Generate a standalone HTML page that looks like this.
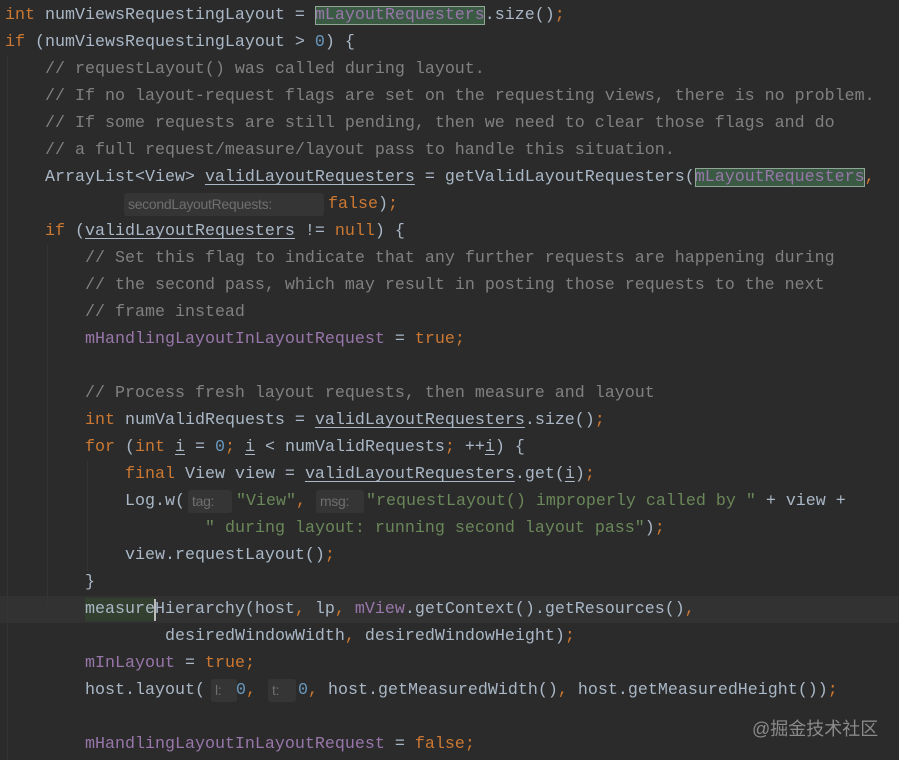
<!DOCTYPE html>
<html><head><meta charset="utf-8"><style>
html,body{margin:0;padding:0;background:#2b2b2b;width:899px;height:760px;overflow:hidden}
body{position:relative;font-family:"Liberation Mono",monospace;font-size:16.67px;color:#a9b7c6}
#w{position:absolute;left:0;top:2px;width:899px;height:760px}
.l{position:absolute;height:27px;line-height:27px;white-space:pre}
.k{color:#cc7832}.c{color:#808080}.n{color:#6897bb}.s{color:#6a8759}.f{color:#9876aa}
.u{text-decoration:underline;text-underline-offset:3px}
.hl{background:#3a5a44;outline:1px solid #8fa596;outline-offset:-1px}
.h{position:absolute;height:23px;line-height:23px;background:#353535;color:#6f6f6f;font-family:"Liberation Sans",sans-serif;font-size:14px;letter-spacing:-0.3px;padding:0 4px;border-radius:3px;overflow:hidden;white-space:nowrap}
.g{position:absolute;width:1px;background:#353535}
</style></head><body><div id="w">
<div style="position:absolute;left:0;top:594px;width:899px;height:27px;background:#323232"></div>
<div class="g" style="left:7px;top:54px;height:706px"></div>
<div class="g" style="left:47px;top:243px;height:360px"></div>
<div class="g" style="left:87px;top:459px;height:110px"></div>

<div class="l" style="left:5px;top:0"><span class="k">int</span> numViewsRequestingLayout = <span class="f hl">mLayoutRequesters</span>.size()<span class="k">;</span></div>
<div class="l" style="left:5px;top:27px"><span class="k">if</span> (numViewsRequestingLayout &gt; <span class="n">0</span>) {</div>
<div class="l c" style="left:45px;top:54px">// requestLayout() was called during layout.</div>
<div class="l c" style="left:45px;top:81px">// If no layout-request flags are set on the requesting views, there is no problem.</div>
<div class="l c" style="left:45px;top:108px">// If some requests are still pending, then we need to clear those flags and do</div>
<div class="l c" style="left:45px;top:135px">// a full request/measure/layout pass to handle this situation.</div>
<div class="l" style="left:45px;top:162px">ArrayList&lt;View&gt; <span class="u">validLayoutRequesters</span> = getValidLayoutRequesters(<span class="f hl">mLayoutRequesters</span><span class="k">,</span></div>
<div class="h" style="left:124px;top:191px;width:192px">secondLayoutRequests:</div>
<div class="l" style="left:328px;top:189px"><span class="k">false</span>)<span class="k">;</span></div>
<div class="l" style="left:45px;top:216px"><span class="k">if</span> (<span class="u">validLayoutRequesters</span> != <span class="k">null</span>) {</div>
<div class="l c" style="left:85px;top:243px">// Set this flag to indicate that any further requests are happening during</div>
<div class="l c" style="left:85px;top:270px">// the second pass, which may result in posting those requests to the next</div>
<div class="l c" style="left:85px;top:297px">// frame instead</div>
<div class="l" style="left:85px;top:324px"><span class="f">mHandlingLayoutInLayoutRequest</span> = <span class="k">true;</span></div>
<div class="l c" style="left:85px;top:378px">// Process fresh layout requests, then measure and layout</div>
<div class="l" style="left:85px;top:405px"><span class="k">int</span> numValidRequests = <span class="u">validLayoutRequesters</span>.size()<span class="k">;</span></div>
<div class="l" style="left:85px;top:432px"><span class="k">for</span> (<span class="k">int</span> <span class="u">i</span> = <span class="n">0</span><span class="k">;</span> <span class="u">i</span> &lt; numValidRequests<span class="k">;</span> ++<span class="u">i</span>) {</div>
<div class="l" style="left:125px;top:459px"><span class="k">final</span> View view = <span class="u">validLayoutRequesters</span>.get(<span class="u">i</span>)<span class="k">;</span></div>
<div class="l" style="left:125px;top:486px">Log.w(</div>
<div class="h" style="left:188px;top:488px;width:36px">tag:</div>
<div class="l" style="left:236px;top:486px"><span class="s">"View"</span><span class="k">,</span></div>
<div class="h" style="left:316px;top:488px;width:40px">msg:</div>
<div class="l" style="left:366px;top:486px"><span class="s">"requestLayout() improperly called by "</span> + view +</div>
<div class="l" style="left:205px;top:513px"><span class="s">" during layout: running second layout pass"</span>)<span class="k">;</span></div>
<div class="l" style="left:125px;top:540px">view.requestLayout()<span class="k">;</span></div>
<div class="l" style="left:85px;top:567px">}</div>
<div style="position:absolute;left:85px;top:596px;width:70px;height:23px;background:#33402f"></div>
<div class="l" style="left:85px;top:594px">measureHierarchy(host<span class="k">,</span> lp<span class="k">,</span> <span class="f">mView</span>.getContext().getResources()<span class="k">,</span></div>
<div style="position:absolute;left:154px;top:597px;width:2px;height:22px;background:#bbbbbb"></div>
<div class="l" style="left:165px;top:621px">desiredWindowWidth<span class="k">,</span> desiredWindowHeight)<span class="k">;</span></div>
<div class="l" style="left:85px;top:648px"><span class="f">mInLayout</span> = <span class="k">true;</span></div>
<div class="l" style="left:85px;top:675px">host.layout(</div>
<div class="h" style="left:211px;top:677px;width:18px">l:</div>
<div class="l" style="left:236px;top:675px"><span class="n">0</span><span class="k">,</span></div>
<div class="h" style="left:268px;top:677px;width:20px">t:</div>
<div class="l" style="left:298px;top:675px"><span class="n">0</span><span class="k">,</span> host.getMeasuredWidth()<span class="k">,</span> host.getMeasuredHeight())<span class="k">;</span></div>
<div class="l" style="left:85px;top:729px"><span class="f">mHandlingLayoutInLayoutRequest</span> = <span class="k">false;</span></div>
</div>
<div style="position:absolute;left:752px;top:715px;font-family:'Liberation Sans','Noto Sans CJK SC',sans-serif;font-size:18px;color:#8a8a8a">@掘金技术社区</div>
</body></html>
